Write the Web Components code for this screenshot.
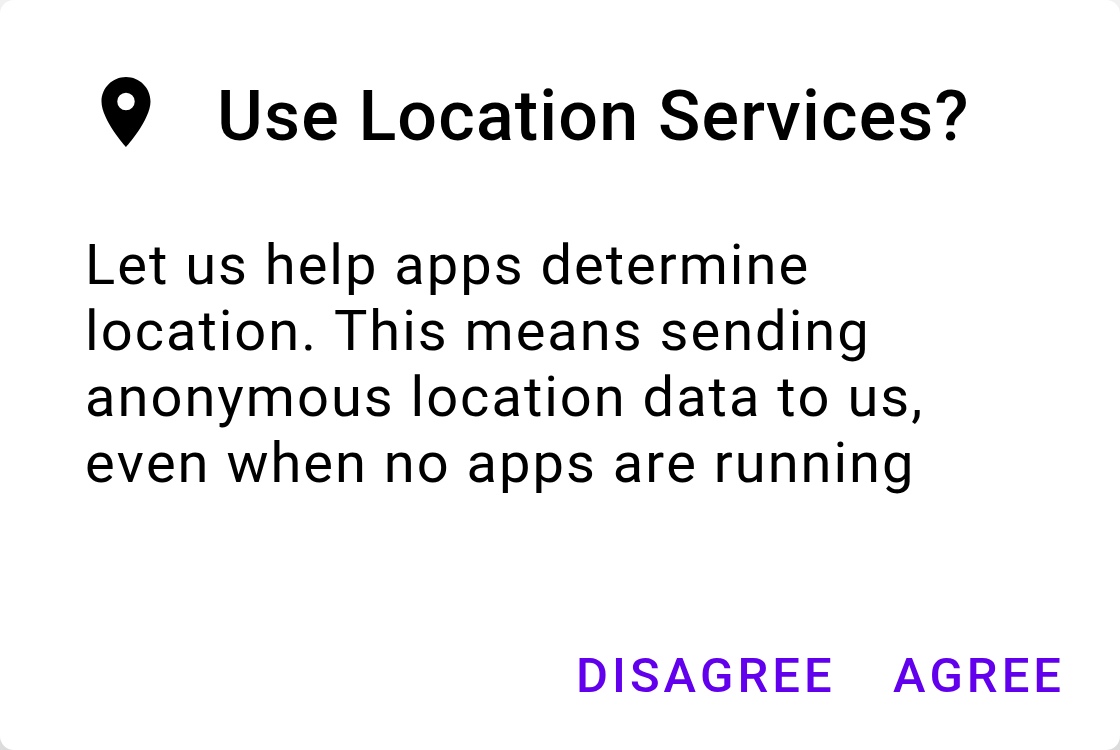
<!DOCTYPE html>
<html lang="en">
<head>
<meta charset="utf-8">
<title>Use Location Services?</title>
<style>
html, body { margin: 0; height: 100%; overflow: hidden; }
body { background: linear-gradient(#f1f1f1, #dcdcdc); }
</style>
</head>
<body>
<location-dialog>
  <pin-icon slot="icon"></pin-icon>
  <span slot="title">Use Location Services?</span>
  <span>Let us help apps determine<br>location. This means sending<br>anonymous location data to us,<br>even when no apps are running</span>
  <dialog-button slot="actions">Disagree</dialog-button>
  <dialog-button slot="actions">Agree</dialog-button>
</location-dialog>
<script>
class LocationDialog extends HTMLElement {
  constructor() {
    super();
    this.attachShadow({ mode: 'open' }).innerHTML = `
      <style>
        :host { display: flex; flex-direction: column; box-sizing: border-box; width: 1120px; height: 750px; padding: 69px 55px 46px 84px; background: #fff; border-radius: 14px; font-family: Roboto, sans-serif; font-kerning: none; color: #000; }
        header { display: flex; align-items: center; gap: 49px; height: 86px; }
        h2 { margin: 7px 0 0; font-size: 70px; line-height: 80px; font-weight: 500; letter-spacing: 1.17px; white-space: nowrap; }
        p { margin: 77px 0 0 1.1px; font-size: 56px; line-height: 66px; letter-spacing: 2px; white-space: nowrap; }
        footer { display: flex; justify-content: flex-end; gap: 57.3px; margin-top: auto; }
      </style>
      <header><slot name="icon"></slot><h2><slot name="title"></slot></h2></header>
      <p><slot></slot></p>
      <footer><slot name="actions"></slot></footer>`;
  }
}
class PinIcon extends HTMLElement {
  constructor() {
    super();
    this.attachShadow({ mode: 'open' }).innerHTML = `
      <style>:host { display: block; width: 84px; height: 84px; } svg { display: block; width: 100%; height: 100%; }</style>
      <svg viewBox="0 0 24 24"><path d="M12 2C8.13 2 5 5.13 5 9c0 5.25 7 13 7 13s7-7.75 7-13c0-3.87-3.13-7-7-7zm0 9.5a2.5 2.5 0 0 1 0-5 2.5 2.5 0 0 1 0 5z"/></svg>`;
  }
}
class DialogButton extends HTMLElement {
  constructor() {
    super();
    this.attachShadow({ mode: 'open' }).innerHTML = `
      <style>
        :host { display: block; }
        button { display: block; margin: 0; padding: 0; border: 0; background: none; color: #6200ee; font: 500 49px/56px Roboto, sans-serif; font-kerning: none; letter-spacing: 4px; text-transform: uppercase; }
      </style>
      <button type="button"><slot></slot></button>`;
  }
}
customElements.define('location-dialog', LocationDialog);
customElements.define('pin-icon', PinIcon);
customElements.define('dialog-button', DialogButton);
</script>
</body>
</html>
